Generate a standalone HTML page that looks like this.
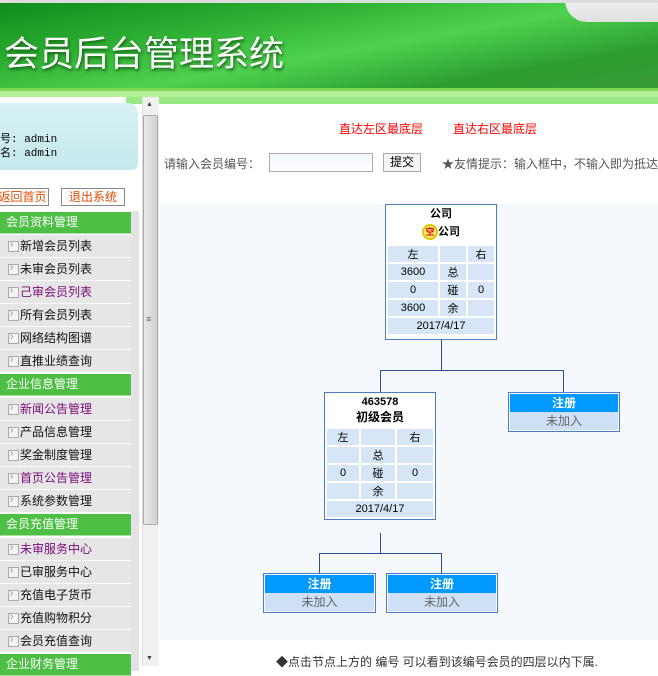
<!DOCTYPE html>
<html><head><meta charset="utf-8"><style>
*{margin:0;padding:0;box-sizing:border-box}
body{width:658px;height:666px;overflow:hidden;position:relative;background:#fff;font-family:"Liberation Sans","Noto Sans CJK SC",sans-serif;font-size:12px;color:#333}
.a{position:absolute}
#hdr{left:0;top:0;width:658px;height:88px;background:linear-gradient(170deg,#0e8a1a 0%,#2cae32 30%,#4fd24f 55%,#2c9e30 80%,#3a9a3a 100%)}
#title{left:4px;top:26px;font-size:35px;color:#fff;letter-spacing:0px;text-shadow:1px 2px 3px #145a14;font-family:"Noto Sans CJK SC",sans-serif;white-space:nowrap}
.mi{position:absolute;left:0;width:131px;height:22px;background:#e6e6e6;font-size:12px;line-height:22px;padding-left:20px;color:#111}
.mi:before{content:"";position:absolute;left:8px;top:6px;width:9px;height:9px;border:1px solid #aaa;background:#f4f4f4}
.mi:after{content:"›";position:absolute;left:10px;top:-1px;font-size:10px;color:#888}
.mh{position:absolute;left:0;width:131px;height:22px;background:#4cbf44;color:#fff;line-height:21px;padding-left:6px;font-size:12px;border-bottom:1px solid #a8e0a0}
.p{color:#7a0a7a}
.node{position:absolute;border:1px solid #4a7cc4;background:#fff;text-align:center;font-size:11px;color:#000}
table{border-collapse:collapse;width:100%}
td{background:#d6e6f6;border:2px solid #fff;height:18px;font-size:11px;text-align:center;padding:0}
.ln{position:absolute;background:#2a4e8c}
.reg{position:absolute;border:1px solid #4a7cc4;background:#fff;padding:1px}
.reg div:first-child{background:#0099ff;color:#fff;font-weight:bold;height:18px;line-height:18px;text-align:center}
.reg div:last-child{background:#cde0f5;color:#666;height:18px;line-height:18px;text-align:center}
</style></head><body>
<div id="hdr" class="a"></div>
<div class="a" style="left:565px;top:0;width:93px;height:22px;background:linear-gradient(180deg,#f0f0f0,#e0e0e0);border-bottom-left-radius:22px"></div>
<div class="a" style="left:0;top:0;width:658px;height:3px;background:#ddd"></div>
<div id="title" class="a">会员后台管理系统</div>
<div class="a" style="left:0;top:88px;width:658px;height:8px;background:#7dd958"></div>
<div class="a" style="left:0;top:91px;width:658px;height:6px;background:#b6f09a"></div>
<div class="a" style="left:126px;top:97px;width:532px;height:7px;background:#98e884"></div>
<div class="a" style="left:0;top:103px;width:138px;height:67px;background:linear-gradient(#d8f2f4,#c4e8ec);border-top-right-radius:10px;border-bottom-right-radius:6px"></div>
<div class="a" style="left:0;top:133px;font-family:'Liberation Mono','Noto Sans CJK SC',monospace;font-size:11px;line-height:14px;color:#000">号: admin<br>名: admin</div>
<div class="a" style="left:-4px;top:188px;width:53px;height:18px;border:1px solid #888;background:#fff;color:#e24a00;font-size:12px;line-height:16px;text-align:center">返回首页</div>
<div class="a" style="left:61px;top:188px;width:64px;height:18px;border:1px solid #888;background:#fff;color:#e24a00;font-size:12px;line-height:16px;text-align:center">退出系统</div>
<div class="a" style="left:0;top:211px;width:131px;height:460px;background:#fff"></div>
<div class="a" style="left:131px;top:211px;width:8px;height:460px;background:#e2e2e2"></div>
<div class="mh" style="top:212px">会员资料管理</div>
<div class="mi" style="top:235px">新增会员列表</div>
<div class="mi" style="top:258px">未审会员列表</div>
<div class="mi" style="top:281px"><span class="p">己审会员列表</span></div>
<div class="mi" style="top:304px">所有会员列表</div>
<div class="mi" style="top:327px">网络结构图谱</div>
<div class="mi" style="top:350px">直推业绩查询</div>
<div class="mh" style="top:374px">企业信息管理</div>
<div class="mi" style="top:398px"><span class="p">新闻公告管理</span></div>
<div class="mi" style="top:421px">产品信息管理</div>
<div class="mi" style="top:444px">奖金制度管理</div>
<div class="mi" style="top:467px"><span class="p">首页公告管理</span></div>
<div class="mi" style="top:490px">系统参数管理</div>
<div class="mh" style="top:514px">会员充值管理</div>
<div class="mi" style="top:538px"><span class="p">未审服务中心</span></div>
<div class="mi" style="top:561px">已审服务中心</div>
<div class="mi" style="top:584px">充值电子货币</div>
<div class="mi" style="top:607px">充值购物积分</div>
<div class="mi" style="top:630px">会员充值查询</div>
<div class="mh" style="top:654px">企业财务管理</div>
<div class="a" style="left:142px;top:97px;width:17px;height:569px;background:#f0f0f0;border-left:1px solid #ddd"></div>
<div class="a" style="left:146px;top:101px;font-size:7px;color:#444">▲</div>
<div class="a" style="left:143px;top:115px;width:15px;height:410px;background:linear-gradient(90deg,#e8e8e8,#d0d0d0);border:1px solid #aaa;border-radius:2px"></div>
<div class="a" style="left:146px;top:314px;font-size:9px;color:#666">≡</div>
<div class="a" style="left:146px;top:655px;font-size:7px;color:#444">▼</div>
<div class="a" style="left:339px;top:120px;color:#f00;font-size:12px">直达左区最底层</div>
<div class="a" style="left:453px;top:120px;color:#f00;font-size:12px">直达右区最底层</div>
<div class="a" style="left:164px;top:155px;color:#555;font-size:12px">请输入会员编号：</div>
<div class="a" style="left:269px;top:153px;width:104px;height:19px;border:1px solid #aaa;background:linear-gradient(#f0f6ff,#fff)"></div>
<div class="a" style="left:383px;top:153px;width:38px;height:19px;border:1px solid #aaa;background:#f4f4f4;text-align:center;line-height:17px;color:#000;font-size:12px">提交</div>
<div class="a" style="left:442px;top:155px;color:#555;font-size:12px;white-space:nowrap">★友情提示：输入框中，不输入即为抵达</div>
<div class="a" style="left:160px;top:204px;width:498px;height:436px;background:#f5f9fd"></div>
<div class="node" style="left:385px;top:204px;width:112px;height:136px">
<div style="font-weight:bold;height:16px;line-height:18px">公司</div>
<div style="font-weight:bold;height:21px;line-height:22px"><span style="display:inline-block;width:16px;height:16px;border-radius:8px;background:#f4ec80;border:2px solid #e0c800;color:#e00;font-size:9px;line-height:12px;vertical-align:middle">空</span>公司</div>
<table style="margin-top:2px"><tr><td style="width:52px">左</td><td style="width:28px"></td><td>右</td></tr>
<tr><td>3600</td><td>总</td><td></td></tr><tr><td>0</td><td>碰</td><td>0</td></tr><tr><td>3600</td><td>余</td><td></td></tr><tr><td colspan="3">2017/4/17</td></tr></table>
</div>
<div class="ln" style="left:441px;top:340px;width:1px;height:30px"></div>
<div class="ln" style="left:380px;top:370px;width:184px;height:1px"></div>
<div class="ln" style="left:380px;top:370px;width:1px;height:22px"></div>
<div class="ln" style="left:563px;top:370px;width:1px;height:22px"></div>
<div class="node" style="left:324px;top:392px;width:112px;height:128px">
<div style="font-weight:bold;height:14px;line-height:18px">463578</div>
<div style="font-weight:bold;height:18px;line-height:20px;font-size:12px">初级会员</div>
<table style="margin-top:2px"><tr><td style="width:34px">左</td><td style="width:36px"></td><td>右</td></tr>
<tr><td></td><td>总</td><td></td></tr><tr><td>0</td><td>碰</td><td>0</td></tr><tr><td></td><td>余</td><td></td></tr><tr><td colspan="3">2017/4/17</td></tr></table>
</div>
<div class="reg" style="left:508px;top:392px;width:112px;height:40px"><div>注册</div><div>未加入</div></div>
<div class="ln" style="left:380px;top:533px;width:1px;height:20px"></div>
<div class="ln" style="left:319px;top:553px;width:123px;height:1px"></div>
<div class="ln" style="left:319px;top:553px;width:1px;height:20px"></div>
<div class="ln" style="left:441px;top:553px;width:1px;height:20px"></div>
<div class="reg" style="left:263px;top:573px;width:113px;height:40px"><div>注册</div><div>未加入</div></div>
<div class="reg" style="left:386px;top:573px;width:112px;height:40px"><div>注册</div><div>未加入</div></div>
<div class="a" style="left:276px;top:653px;color:#333;font-size:12px;white-space:nowrap">◆点击节点上方的 编号 可以看到该编号会员的四层以内下属.</div>
</body></html>
